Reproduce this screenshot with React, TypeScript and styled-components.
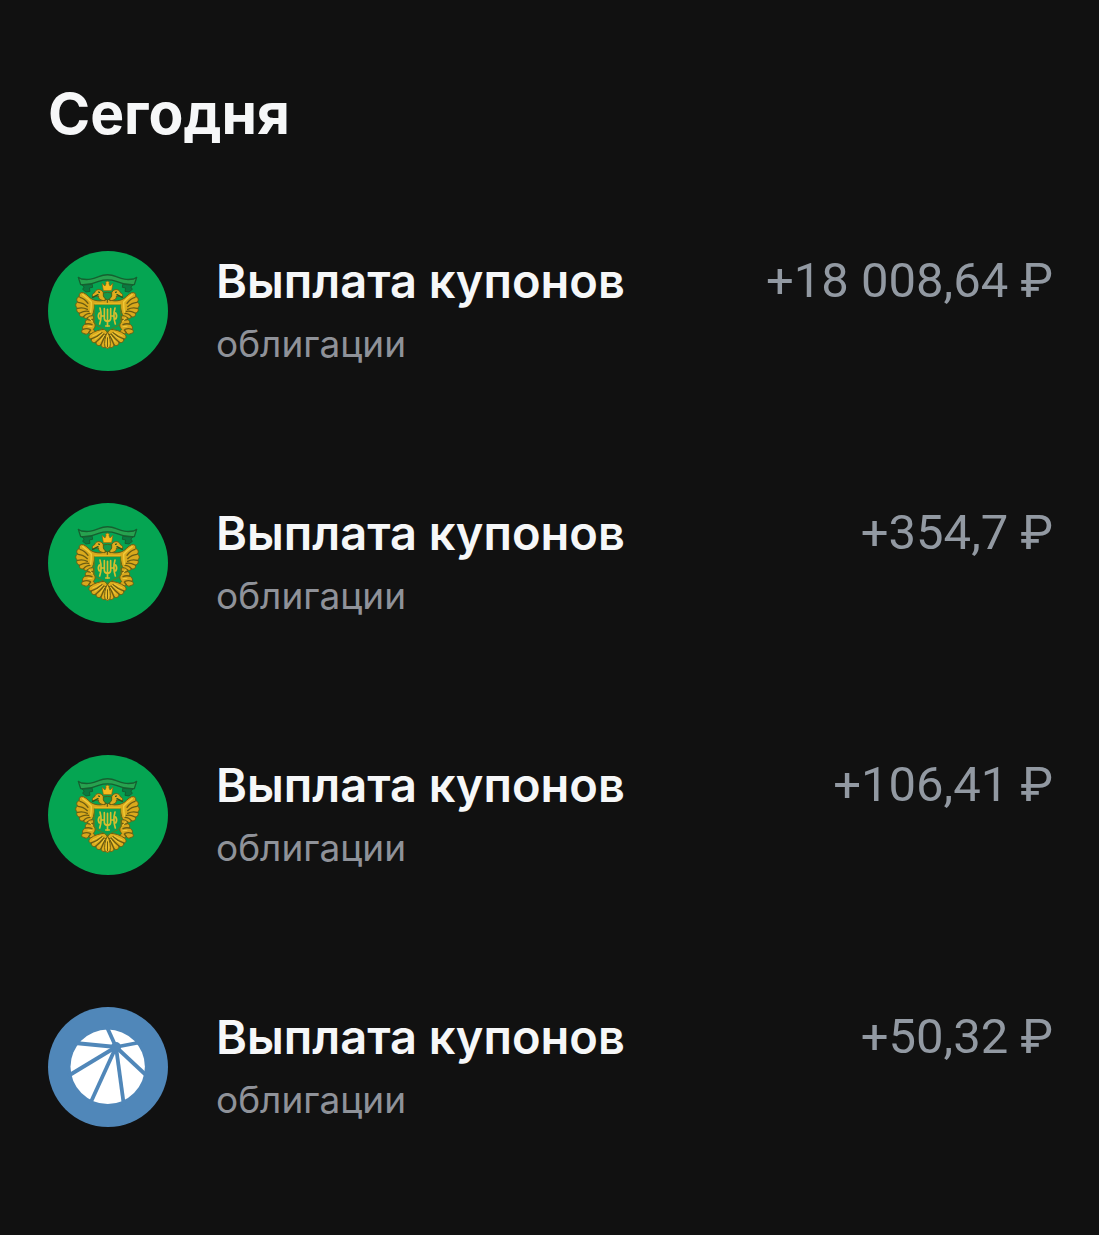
import React from "react";
import styled, { createGlobalStyle } from "styled-components";

const GlobalStyle = createGlobalStyle`
  * {
    box-sizing: border-box;
  }

  body {
    margin: 0;
    min-height: 100vh;
    background: #111111;
    font-family: Inter, "Liberation Sans", sans-serif;
  }
`;

const Page = styled.main`
  padding: 78px 46px 0 48px;
`;

const Heading = styled.h1`
  margin: 0 0 35px;
  font-size: 57px;
  line-height: 72px;
  font-weight: 700;
  color: #f6f7f8;
`;

const List = styled.ul`
  margin: 0;
  padding: 0;
  list-style: none;
`;

const Row = styled.li`
  display: flex;
  align-items: flex-start;
  gap: 48px;
  padding: 66px 0;
`;

const Avatar = styled.svg`
  flex: none;
  display: block;
  width: 120px;
  height: 120px;
`;

const Info = styled.div`
  flex: 1;
  min-width: 0;
`;

const Title = styled.h2`
  margin: 0;
  font-size: 47px;
  line-height: 60px;
  font-weight: 600;
  color: #f6f7f8;
`;

const Subtitle = styled.p`
  margin: 8px 0 0;
  font-size: 37px;
  line-height: 50px;
  color: #8f9299;
`;

const Amount = styled.div`
  flex: none;
  font-family: Roboto, "Liberation Sans", sans-serif;
  font-size: 49px;
  line-height: 60px;
  font-weight: 400;
  color: #9299a2;
`;

/* Left half of the eagle, mirrored for the right half */
const EagleHalf = () => (
  <g stroke="#6b5c12" strokeWidth="3" strokeLinejoin="round" strokeLinecap="round">
    {/* ribbon tail */}
    <path fill="#0a7a40" stroke="#156030" d="M30 50 L60 47 L62 58 L52 60 L54 70 L42 72 L32 64 L36 58 Z" />
    {/* wing */}
    <path
      fill="#d9a91c"
      d="M106 94 C92 100 78 100 66 96 C52 92 46 78 34 74 C24 72 20 78 22 86 C14 88 12 96 17 102 C10 106 9 115 16 120 C12 126 15 134 23 135 C20 142 26 149 34 146 C36 152 44 153 48 148 C56 148 62 142 64 134 L70 110 L106 108 Z"
    />
    <path
      fill="none"
      strokeWidth="4"
      d="M24 88 Q38 92 48 106 M18 103 Q34 104 46 116 M17 121 Q32 117 46 124 M24 135 Q38 127 50 130 M35 146 Q42 136 54 136"
    />
    <path fill="none" stroke="#f0cb3a" strokeWidth="4" d="M32 80 Q46 90 58 102 M58 102 Q58 118 56 132" />
    {/* neck and head */}
    <path
      fill="#dfad1f"
      d="M98 98 C86 98 78 92 80 84 C74 84 68 86 62 88 C59 82 62 76 68 74 C70 66 80 62 88 67 C97 72 94 82 100 88 Z"
    />
    <path fill="none" stroke="#1f5a22" strokeWidth="4" d="M62 88 Q70 84 78 80 M80 72 L82 73" />
    {/* leg with claw */}
    <path
      fill="#d8a71c"
      d="M64 144 C54 142 46 146 47 154 C40 156 38 163 42 168 C34 170 29 178 33 184 C27 188 28 196 35 196 C40 200 47 199 50 194 C56 200 66 200 72 194 L64 184 C70 178 72 170 66 164 Z"
    />
    <path fill="none" strokeWidth="4" d="M47 155 Q56 158 62 154 M42 168 Q52 166 60 170 M33 184 Q44 180 54 184 M50 194 L56 186" />
    <path fill="none" stroke="#f0cb3a" strokeWidth="3" d="M53 150 L60 160 M48 175 L60 176" />
    {/* tail feathers */}
    <path
      fill="#dcab1d"
      d="M98 184 C84 184 66 190 56 198 C48 204 50 213 58 213 C56 221 65 227 72 222 C71 231 80 236 87 230 C88 238 96 242 102 236 L106 194 Z"
    />
    <path fill="none" strokeWidth="4" d="M58 213 Q76 206 90 194 M72 222 Q84 212 96 198 M87 230 Q94 214 101 200" />
    <path fill="none" stroke="#f0cb3a" strokeWidth="3" d="M62 204 Q76 198 86 192 M69 214 Q82 206 92 196 M83 222 Q90 212 97 202" />
  </g>
);

const Eagle = () => (
  <g transform="translate(24 17) scale(.3333)">
    <EagleHalf />
    <g transform="translate(213 0) scale(-1 1)">
      <EagleHalf />
    </g>
    {/* ribbon */}
    <path
      fill="#27a24f"
      stroke="#156030"
      strokeWidth="4"
      strokeLinejoin="round"
      d="M19 28 L28 33 C52 37 64 32 80 26 C96 19 117 19 133 26 C149 32 161 37 185 33 L194 28 L187 50 C163 52 149 47 133 40 C117 35 96 35 80 40 C64 47 50 52 26 50 Z"
    />
    {/* middle tail feather */}
    <path fill="#edbe2a" stroke="#6b5c12" strokeWidth="3" d="M106.5 192 C99 204 96 226 99 237 Q106.5 246 114 237 C117 226 114 204 106.5 192 Z" />
    <path fill="none" stroke="#6b5c12" strokeWidth="3" d="M106.5 208 V238" />
    {/* crown */}
    <path
      fill="#f4bb1d"
      stroke="#7e5f10"
      strokeWidth="2"
      strokeLinejoin="round"
      d="M90 46 L99 54 L102 47 L101 42 Q106.5 37 112 42 L111 47 L114 54 L123 46 L119 68 H94 Z"
    />
    {/* small shield between the heads */}
    <path fill="#14974a" stroke="#46651a" strokeWidth="3" d="M94 75 Q106.5 71 119 75 V84 Q117 92 106.5 96 Q96 92 94 84 Z" />
    {/* main shield */}
    <path fill="#08a052" stroke="#5d7c1c" strokeWidth="3" d="M67 109 H146 V162 Q144 174 124 180 L106.5 190 L89 180 Q69 174 67 162 Z" />
    <path fill="none" stroke="#e8b821" strokeWidth="5" d="M67 107 H146" />
    {/* monogram */}
    <g fill="none" stroke="#d8be2e" strokeWidth="5" strokeLinecap="round">
      <path d="M84 120 Q91 144 83 168 M129 120 Q122 144 130 168" />
      <path d="M82 135 Q76 144 82 153 M131 135 Q137 144 131 153" />
      <path d="M97 122 V152 Q98 160 106.5 161 Q115 160 116 152 V122 M106.5 124 V174" />
      <path d="M88 144 H97 M116 144 H125 M101 174 H112" />
    </g>
  </g>
);

const CrestLogo = () => (
  <Avatar viewBox="0 0 120 120" aria-hidden="true">
    <circle cx="60" cy="60" r="60" fill="#05a552" />
    <Eagle />
  </Avatar>
);

const ParachuteLogo = () => (
  <Avatar viewBox="0 0 120 120" aria-hidden="true">
    <circle cx="60" cy="60" r="60" fill="#5087b9" />
    <circle cx="59.7" cy="59.8" r="37.2" fill="#ffffff" />
    <g stroke="#5087b9" strokeWidth="3.8">
      <path d="M68 40 L58 18" />
      <path d="M68 40 L27 36" />
      <path d="M68 40 L94 35" />
      <path d="M68 40 L20 69" />
      <path d="M68 40 L42 97" />
      <path d="M68 40 L76 99" />
      <path d="M68 40 L99 69" />
    </g>
    <circle cx="68" cy="40" r="5" fill="#5087b9" />
  </Avatar>
);

const payouts = [
  { id: 1, logo: CrestLogo, amount: "+18 008,64 ₽" },
  { id: 2, logo: CrestLogo, amount: "+354,7 ₽" },
  { id: 3, logo: CrestLogo, amount: "+106,41 ₽" },
  { id: 4, logo: ParachuteLogo, amount: "+50,32 ₽" },
];

export default function App() {
  return (
    <>
      <GlobalStyle />
      <Page>
        <Heading>Сегодня</Heading>
        <List>
          {payouts.map(({ id, logo: Logo, amount }) => (
            <Row key={id}>
              <Logo />
              <Info>
                <Title>Выплата купонов</Title>
                <Subtitle>облигации</Subtitle>
              </Info>
              <Amount>{amount}</Amount>
            </Row>
          ))}
        </List>
      </Page>
    </>
  );
}
